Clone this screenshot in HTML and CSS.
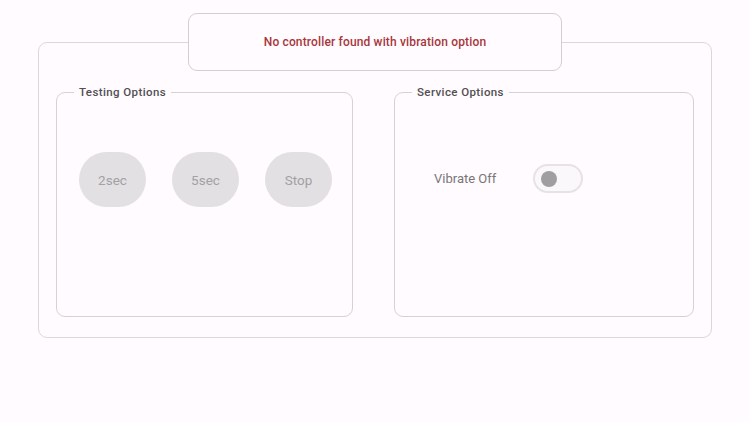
FILE: index.html
```html
<!DOCTYPE html>
<html lang="en">
<head>
<meta charset="UTF-8">
<meta name="viewport" content="width=device-width, initial-scale=1.0">
<title>Vibration Tester</title>
<link rel="stylesheet" href="styles.css">
</head>
<body>
  <fieldset class="panel">
    <legend class="status">No controller found with vibration option</legend>
    <div class="groups">
      <fieldset class="group">
        <legend>Testing Options</legend>
        <div class="buttons">
          <button class="pill" disabled>2sec</button>
          <button class="pill" disabled>5sec</button>
          <button class="pill" disabled>Stop</button>
        </div>
      </fieldset>
      <fieldset class="group">
        <legend>Service Options</legend>
        <div class="service">
          <span class="label">Vibrate Off</span>
          <span class="switch"><span class="thumb"></span></span>
        </div>
      </fieldset>
    </div>
  </fieldset>
</body>
</html>
```

FILE: styles.css
```css
body {
  margin: 0;
  background-color: #fffbfe;
  font-family: Roboto, "Liberation Sans", sans-serif;
  padding-top: 13px;
}
.panel {
  width: 674px;
  box-sizing: border-box;
  margin: 0 auto;
  padding: 0 17px 20px 17px;
  border: 1px solid #dcd7db;
  border-radius: 9px;
}
.status {
  margin: 0 auto;
  width: 374px;
  height: 58px;
  box-sizing: border-box;
  border: 1px solid #d3ced2;
  border-radius: 9px;
  display: flex;
  align-items: center;
  justify-content: center;
  color: #a8363b;
  font-size: 12px;
  font-weight: 500;
  letter-spacing: 0.15px;
  padding: 0;
}
.groups {
  display: grid;
  grid-template-columns: 297px 300px;
  gap: 41px;
  margin-top: 14px;
}
.group {
  margin: 0;
  height: 232px;
  box-sizing: border-box;
  border: 1px solid #d6d1d5;
  border-radius: 9px;
  padding: 0 17px;
}
.group legend {
  padding: 0 5px;
  color: #524f53;
  font-size: 11.5px;
  font-weight: 500;
  letter-spacing: 0.4px;
}
.buttons {
  display: flex;
  gap: 26px;
  padding: 53px 0 0 5px;
}
.pill {
  width: 67px;
  height: 55px;
  border: none;
  border-radius: 28px;
  background-color: #e2e0e2;
  color: #a3a1a4;
  font-family: inherit;
  font-size: 13.5px;
}
.service {
  display: flex;
  align-items: center;
  gap: 37px;
  padding: 65px 0 0 22px;
}
.label {
  color: #79767a;
  font-size: 13px;
}
.switch {
  width: 50px;
  height: 29px;
  box-sizing: border-box;
  border: 2px solid #e6e2e6;
  border-radius: 15px;
  background-color: #fbf8fb;
  display: flex;
  align-items: center;
  padding-left: 6px;
}
.thumb {
  width: 16px;
  height: 16px;
  border-radius: 50%;
  background-color: #a19ea2;
}
```
